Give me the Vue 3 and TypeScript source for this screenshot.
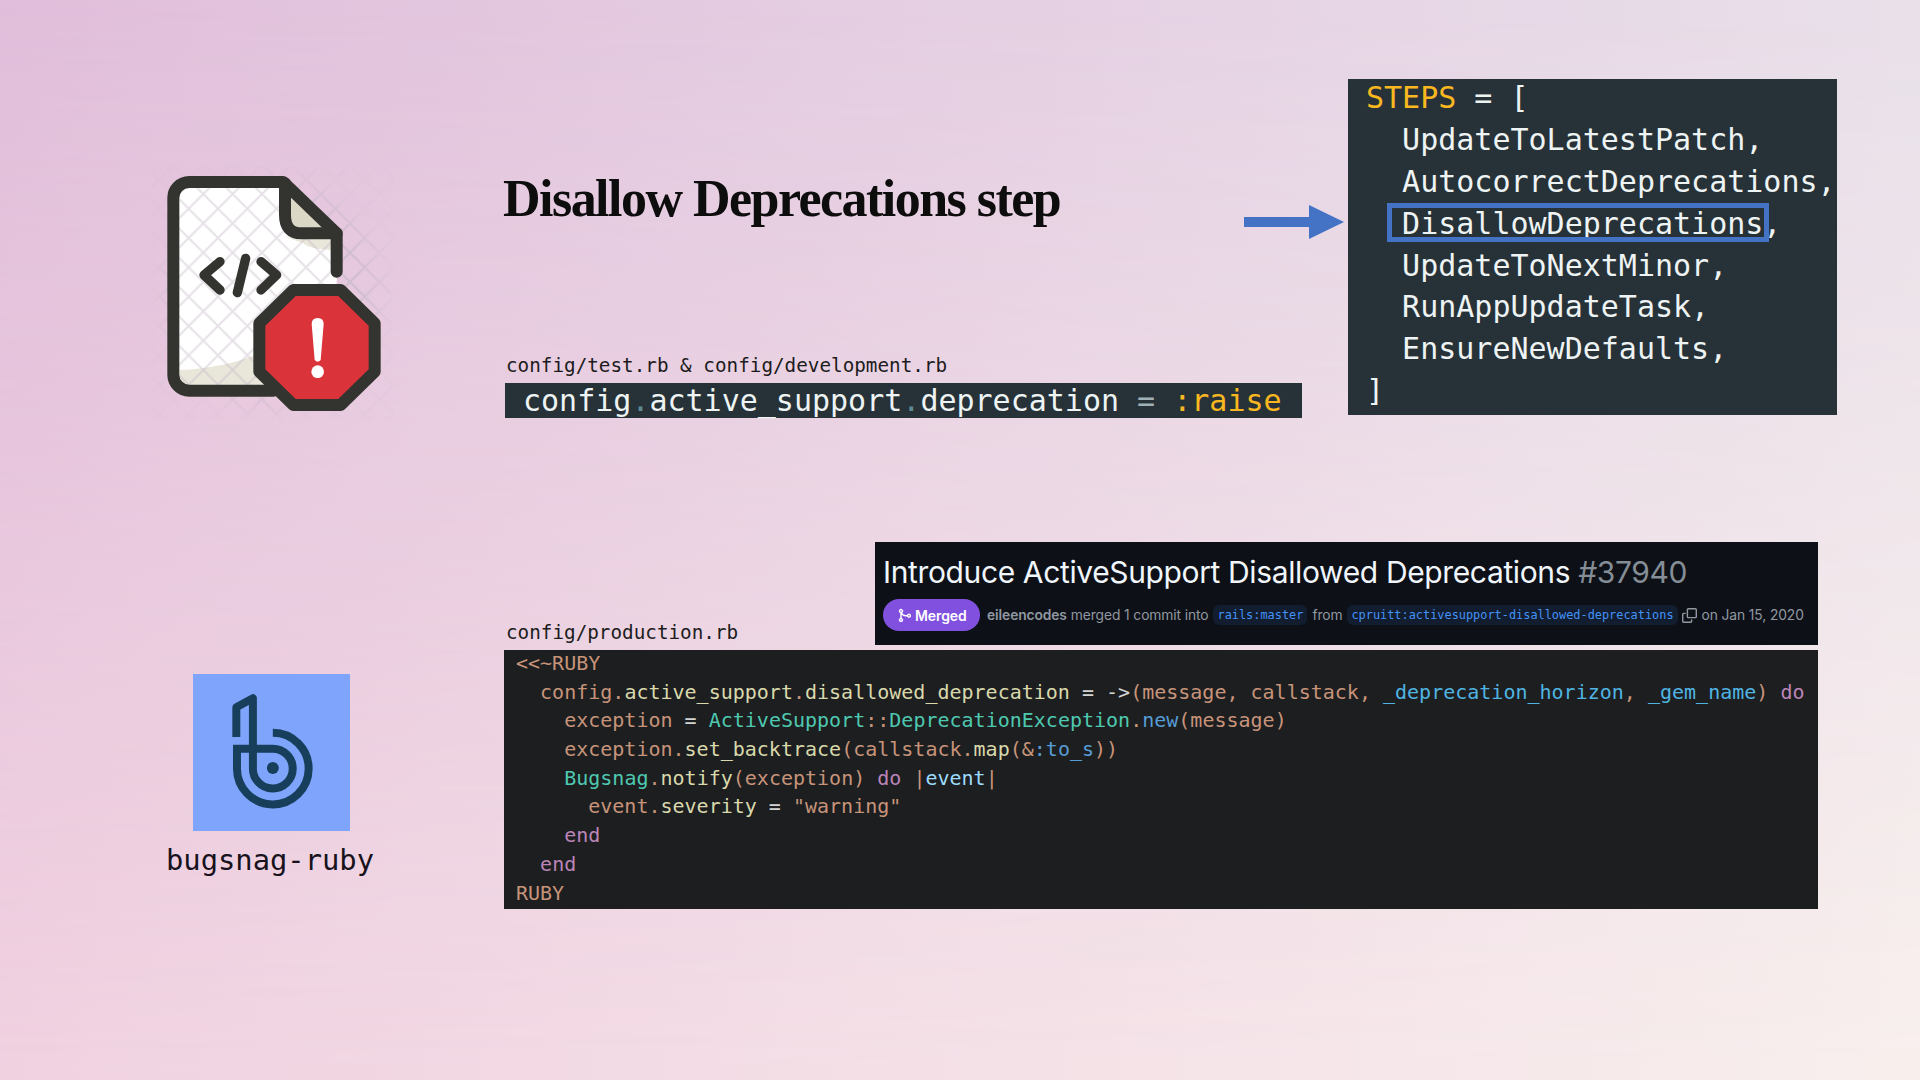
<script setup lang="ts">
type Tok = [string, string]
const o = 'or', y = 'yl', w = 'wh', t = 'te', b = 'bl', p = 'pu', c = 'cy', l = 'lb'
const code: Tok[][] = [
  [['<<~RUBY', o]],
  [['  config.', o], ['active_support', y], ['.', o], ['disallowed_deprecation', y], [' = ', w], ['->', w], ['(message, callstack, ', o], ['_deprecation_horizon', c], [', ', o], ['_gem_name', c], [') ', o], ['do', p]],
  [['    exception', o], [' = ', w], ['ActiveSupport', t], ['::', o], ['DeprecationException', t], ['.', o], ['new', b], ['(message)', o]],
  [['    exception.', o], ['set_backtrace', y], ['(callstack.', o], ['map', y], ['(&', o], [':to_s', b], ['))', o]],
  [['    ', o], ['Bugsnag', t], ['.', o], ['notify', y], ['(exception) ', o], ['do', p], [' |', o], ['event', l], ['|', o]],
  [['      event.', o], ['severity', y], [' = ', w], ['"warning"', o]],
  [['    ', o], ['end', p]],
  [['  ', o], ['end', p]],
  [['RUBY', o]]
]
const steps: string[] = ['UpdateToLatestPatch,', 'AutocorrectDeprecations,', 'DisallowDeprecations,', 'UpdateToNextMinor,', 'RunAppUpdateTask,', 'EnsureNewDefaults,']
</script>

<template>
  <div class="slide">
    <section class="row-top">
      <svg class="doc-icon" viewBox="0 0 900 870" width="300" height="290" aria-hidden="true">
        <defs>
          <pattern id="hatch" width="88" height="88" patternUnits="userSpaceOnUse">
            <path d="M0 0L88 88M88 0L0 88" stroke="#c4b8c6" stroke-width="6" fill="none" />
          </pattern>
          <radialGradient id="fade" cx="50%" cy="50%" r="50%">
            <stop offset="72%" stop-color="#fff" stop-opacity="0.7" />
            <stop offset="100%" stop-color="#fff" stop-opacity="0.08" />
          </radialGradient>
          <mask id="hatch-mask"><rect x="65" y="50" width="725" height="760" fill="url(#fade)" /></mask>
          <clipPath id="paper"><path d="M148 145A30 30 0 0 1 178 114H460L620 265V722H178A30 30 0 0 1 148 692Z" /></clipPath>
        </defs>
        <rect x="65" y="50" width="725" height="760" fill="url(#hatch)" mask="url(#hatch-mask)" />
        <path d="M130 145A48 48 0 0 1 178 96H460L620 250V722H178A48 48 0 0 1 130 674Z" fill="#fff" />
        <g clip-path="url(#paper)">
          <path d="M148 660Q290 655 400 605L440 722H148Z" fill="#e9e6da" />
          <path d="M470 262H620V300Q540 300 520 280Z" fill="#e9e6da" />
          <rect x="100" y="80" width="560" height="660" fill="url(#hatch)" opacity="0.42" />
        </g>
        <path d="M465 100L618 250H515Q465 250 465 195Z" fill="#dcd8c6" />
        <path d="M430 722H178A48 48 0 0 1 130 674V145A48 48 0 0 1 178 96H460L620 250V365" fill="none" stroke="#33342f" stroke-width="36" stroke-linecap="round" stroke-linejoin="round" />
        <path d="M465 100V195Q465 250 515 250H620" fill="none" stroke="#33342f" stroke-width="36" stroke-linecap="round" />
        <path d="M270 335L222 375L270 420M347 325L322 428M393 335L440 375L393 420" fill="none" stroke="#33342f" stroke-width="28" stroke-linecap="round" stroke-linejoin="round" />
        <path d="M490 420H632L734 520V665L632 765H490L388 665V520Z" fill="#da333a" stroke="#33342f" stroke-width="36" stroke-linejoin="round" />
        <path d="M545 522Q545 504 563 504Q581 504 581 522L572 630Q563 640 554 630Z" fill="#fff" />
        <circle cx="563" cy="665" r="19" fill="#fff" />
      </svg>
      <div class="center">
        <div class="title-row">
          <h1 class="title">Disallow Deprecations step</h1>
          <svg class="arrow" viewBox="0 0 100 34" width="100" height="34" aria-hidden="true">
            <path d="M0 12H65V0L100 17L65 34V22H0Z" fill="#4472c4" />
          </svg>
        </div>
        <div class="label label-test">config/test.rb &amp; config/development.rb</div>
        <div class="raise-bar"><span class="fg">config</span><span class="dot">.</span><span class="fg">active_support</span><span class="dot">.</span><span class="fg">deprecation</span><span class="eq"> = </span><span class="gold">:raise</span></div>
      </div>
      <div class="steps">
        <div class="step-line first"><span class="gold">STEPS</span><span class="fg"> = [</span></div>
        <div v-for="s in steps" :key="s" class="step-line fg">{{ '  ' + s }}</div>
        <div class="step-line fg">]</div>
        <div class="highlight"></div>
      </div>
    </section>

    <section class="row-bottom">
      <div class="brand">
        <div class="logo">
          <svg viewBox="0 0 472 473" width="157" height="157" aria-hidden="true">
            <g transform="translate(-128 -72)" fill="none" stroke="#173f5c" stroke-width="24">
              <path d="M258 262V172L308 145V355A60 60 0 1 0 368 297H248" stroke-linejoin="round" />
              <path d="M260 297V355A108 108 0 1 0 368 249" />
              <circle cx="368" cy="355" r="18" fill="#173f5c" stroke="none" />
            </g>
          </svg>
        </div>
        <div class="brand-name">bugsnag-ruby</div>
      </div>
      <div class="right">
        <div class="head-row">
          <div class="label label-prod">config/production.rb</div>
          <div class="pr">
            <div class="pr-title">Introduce ActiveSupport Disallowed Deprecations <span class="pr-num">#37940</span></div>
            <div class="pr-meta">
              <span class="pill">
                <svg viewBox="0 0 16 16" width="15" height="15" aria-hidden="true"><path fill="#fff" d="M5.45 5.154A4.25 4.25 0 0 0 9.25 7.5h1.378a2.251 2.251 0 1 1 0 1.5H9.25A5.734 5.734 0 0 1 5 7.123v3.505a2.25 2.25 0 1 1-1.5 0V5.372a2.25 2.25 0 1 1 1.95-.218ZM4.25 13.5a.75.75 0 1 0 0-1.5.75.75 0 0 0 0 1.5Zm8.5-4.5a.75.75 0 1 0 0-1.5.75.75 0 0 0 0 1.5ZM5 3.25a.75.75 0 1 0 0 .005V3.25Z" /></svg>
                Merged
              </span>
              <span class="author">eileencodes</span>
              <span>merged 1 commit into</span>
              <span class="chip">rails:master</span>
              <span>from</span>
              <span class="chip">cpruitt:activesupport-disallowed-deprecations</span>
              <svg class="copy" viewBox="0 0 16 16" width="15" height="15" aria-hidden="true"><path fill="#9198a1" fill-rule="evenodd" d="M0 6.75C0 5.784.784 5 1.75 5h1.5a.75.75 0 0 1 0 1.5h-1.5a.25.25 0 0 0-.25.25v7.5c0 .138.112.25.25.25h7.5a.25.25 0 0 0 .25-.25v-1.5a.75.75 0 0 1 1.5 0v1.5A1.75 1.75 0 0 1 9.25 16h-7.5A1.75 1.75 0 0 1 0 14.25Z M5 1.75C5 .784 5.784 0 6.75 0h7.5C15.216 0 16 .784 16 1.75v7.5A1.75 1.75 0 0 1 14.25 11h-7.5A1.75 1.75 0 0 1 5 9.25Zm1.75-.25a.25.25 0 0 0-.25.25v7.5c0 .138.112.25.25.25h7.5a.25.25 0 0 0 .25-.25v-7.5a.25.25 0 0 0-.25-.25Z" /></svg>
              <span>on Jan 15, 2020</span>
            </div>
          </div>
        </div>
        <div class="code">
          <div v-for="(line, i) in code" :key="i" class="code-line"><span v-for="(tok, j) in line" :key="j" :class="tok[1]">{{ tok[0] }}</span></div>
        </div>
      </div>
    </section>
  </div>
</template>

<style>
html, body { margin: 0; padding: 0; }
</style>

<style scoped>
.slide {
  position: relative;
  width: 1920px;
  height: 1080px;
  overflow: hidden;
  display: flex;
  flex-direction: column;
  background: linear-gradient(to right, #e1bedb, #e9e0ea);
  font-family: "DejaVu Sans Mono", monospace;
}
.slide::before {
  content: "";
  position: absolute;
  inset: 0;
  background: linear-gradient(to right, #f0d1e0, #f8efed);
  -webkit-mask-image: linear-gradient(to bottom, transparent, #000);
  mask-image: linear-gradient(to bottom, transparent, #000);
}
.row-top, .row-bottom { position: relative; display: flex; }
.row-top { margin-top: 79px; height: 336px; }
.doc-icon { flex: none; margin: 71px 0 0 130px; }
.center { flex: none; width: 841px; margin-left: 73px; display: flex; flex-direction: column; }
.title-row { flex: none; display: flex; justify-content: space-between; height: 271px; }
.title {
  margin: 90px 0 0;
  font-family: "Liberation Serif", serif;
  font-weight: 700;
  font-size: 52px;
  line-height: 60px;
  letter-spacing: -1.53px;
  color: #0d0d0d;
}
.arrow { flex: none; margin: 126px 0 0; }
.label { font-size: 19.3px; line-height: 24px; color: #1c1c1c; white-space: pre; }
.label-test { margin: 4px 0 0 3px; }
.raise-bar {
  box-sizing: border-box;
  flex: none;
  width: 797px;
  height: 35px;
  margin: 5px 0 0 2px;
  padding-left: 18px;
  font-size: 30px;
  line-height: 35px;
  background: #263238;
  white-space: pre;
}
.fg { color: #eef3f3; }
.dot { color: #5f8a94; }
.eq { color: #9fb0b6; }
.gold { color: #f9b820; }
.steps {
  position: relative;
  box-sizing: border-box;
  flex: none;
  width: 489px;
  height: 336px;
  margin-left: 4px;
  padding-left: 18px;
  background: #263238;
  font-size: 30px;
  white-space: pre;
}
.step-line { height: 41.9px; line-height: 41.9px; }
.step-line.first { margin-top: -2px; }
.highlight {
  position: absolute;
  box-sizing: border-box;
  left: 39px;
  top: 124px;
  width: 382px;
  height: 39px;
  border: 5px solid #4472c4;
}
.row-bottom { margin-top: 127px; height: 367px; }
.brand { flex: none; width: 504px; display: flex; flex-direction: column; align-items: flex-start; }
.logo { width: 157px; height: 157px; margin: 132px 0 0 193px; background: #7ea5fb; display: flex; }
.brand-name { margin: 11px 0 0 166px; font-size: 28.8px; line-height: 36px; color: #17121c; white-space: pre; }
.right { width: 1314px; display: flex; flex-direction: column; }
.head-row { display: flex; justify-content: space-between; align-items: flex-end; }
.label-prod { margin: 0 0 0 2px; }
.pr {
  box-sizing: border-box;
  width: 943px;
  height: 103px;
  padding: 10px 8px 0;
  background: #0d1117;
  font-family: Inter, sans-serif;
}
.pr-title { font-size: 30px; line-height: 40px; letter-spacing: -0.37px; color: #f0f6fc; white-space: nowrap; }
.pr-num { color: #858d96; }
.pr-meta { display: flex; align-items: center; height: 32px; margin-top: 7px; font-size: 13.8px; letter-spacing: -0.1px; color: #9198a1; white-space: nowrap; gap: 5px; }
.pill { display: flex; align-items: center; gap: 3px; box-sizing: border-box; flex: none; width: 97px; height: 32px; padding-left: 14px; margin-right: 2px; border-radius: 16px; background: #8250df; color: #fff; font-weight: 600; font-size: 14px; }
.author { font-weight: 600; margin-right: -1px; }
.chip { padding: 3px 4px; border-radius: 6px; background: #121d2f; color: #4493f8; font-family: "DejaVu Sans Mono", monospace; font-size: 11.9px; letter-spacing: 0; }
.copy { margin: 0 0 0 -1px; }
.code {
  box-sizing: border-box;
  width: 1314px;
  height: 259px;
  margin-top: 5px;
  padding-left: 12px;
  background: #1d1e20;
  font-size: 20px;
  white-space: pre;
}
.code-line { height: 28.7px; line-height: 28.7px; }
.code-line:first-child { margin-top: -1px; }
.or { color: #c7947a; }
.yl { color: #d9d9ac; }
.wh { color: #d4d4d4; }
.te { color: #4ec9b0; }
.bl { color: #569cd6; }
.pu { color: #bb85b8; }
.cy { color: #4fb4e2; }
.lb { color: #9cdcfe; }
</style>
